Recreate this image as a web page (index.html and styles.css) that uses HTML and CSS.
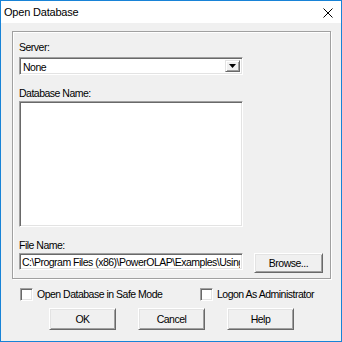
FILE: index.html
```html
<!DOCTYPE html>
<html lang="en">
<head>
    <meta charset="UTF-8">
    <title>Open Database</title>
    <link rel="stylesheet" href="styles.css">
</head>
<body>
<div class="window">
    <div class="titlebar">
        <span class="title">Open Database</span>
        <svg class="close" width="10" height="10" viewBox="0 0 10 10">
            <path d="M0.5 0.5 L9.5 9.5 M9.5 0.5 L0.5 9.5" stroke="#000" stroke-width="1" fill="none"/>
        </svg>
    </div>
    <div class="body">
        <div class="group">
            <div class="label">Server:</div>
            <div class="combo">
                <span class="combo-text">None</span>
                <span class="combo-btn">
                    <svg width="7" height="4" viewBox="0 0 7 4"><path d="M0 0 H7 L3.5 4 Z" fill="#000"/></svg>
                </span>
            </div>
            <div class="label gap">Database Name:</div>
            <div class="listbox"></div>
            <div class="label gap">File Name:</div>
            <div class="file-row">
                <input class="field" type="text" value="C:\Program Files (x86)\PowerOLAP\Examples\Using PowerOLAP.olp" readonly>
                <button class="btn browse">Browse...</button>
            </div>
        </div>

        <div class="checks">
            <label class="check first"><span class="box"></span>Open Database in Safe Mode</label>
            <label class="check"><span class="box"></span>Logon As Administrator</label>
        </div>

        <div class="buttons">
            <button class="btn">OK</button>
            <button class="btn">Cancel</button>
            <button class="btn">Help</button>
        </div>
    </div>
</div>
</body>
</html>
```
FILE: styles.css
```css
* {
    margin: 0;
    padding: 0;
    box-sizing: border-box;
}

body {
    width: 342px;
    height: 342px;
    font-family: "Liberation Sans", Arial, sans-serif;
    font-size: 10.5px;
    letter-spacing: -0.5px;
    line-height: 13px;
    color: #000;
    white-space: nowrap;
}

.window {
    width: 342px;
    height: 342px;
    border: 1px solid #1883d7;
    display: flex;
    flex-direction: column;
    background: #f0f0f0;
}

.titlebar {
    height: 22px;
    background: #fff;
    display: flex;
    align-items: center;
    justify-content: space-between;
    padding: 0 8px 0 3px;
}

.title {
    font-size: 11px;
    letter-spacing: -0.2px;
    padding-top: 1px;
}

.close {
    margin-top: 1px;
}

.body {
    flex: 1;
    padding: 8px 10px 0 11px;
}

.group {
    border: 1px solid #a0a0a0;
    box-shadow: inset 1px 1px 0 #fff, 1px 1px 0 #fff;
    padding: 9px 7px 5px 6px;
}

.label {
    height: 13px;
    margin-bottom: 3px;
}

.label.gap {
    margin-top: 12px;
    margin-bottom: 1px;
}

.group .label:last-of-type {
    margin-bottom: 2px;
}

.combo,
.listbox,
.field {
    width: 224px;
    background: #fff;
    border: 1px solid;
    border-color: #a0a0a0 #fff #fff #a0a0a0;
    box-shadow: inset 1px 1px 0 #696969, inset -1px -1px 0 #e3e3e3;
}

.combo {
    height: 18px;
    display: flex;
    align-items: stretch;
    padding: 2px;
}

.combo-text {
    flex: 1;
    padding-left: 1px;
    line-height: 14px;
}

.combo-btn {
    width: 15px;
    background: #f0f0f0;
    border: 1px solid;
    border-color: #e3e3e3 #696969 #696969 #e3e3e3;
    box-shadow: inset 1px 1px 0 #fff, inset -1px -1px 0 #a0a0a0;
    display: flex;
    align-items: center;
    justify-content: center;
}

.listbox {
    height: 126px;
}

.file-row {
    display: flex;
    align-items: flex-start;
}

.field {
    height: 17px;
    padding: 0 2px;
    font: inherit;
    letter-spacing: inherit;
    color: #000;
    outline: none;
}

.btn {
    font: inherit;
    letter-spacing: inherit;
    color: #000;
    background: #f0f0f0;
    border: 1px solid;
    border-color: #fff #696969 #696969 #fff;
    box-shadow: inset 1px 1px 0 #e3e3e3, inset -1px -1px 0 #a0a0a0;
    width: 67px;
    height: 22px;
}

.browse {
    width: 69px;
    height: 20px;
    margin-left: auto;
}

.checks {
    display: flex;
    margin-top: 9px;
    padding-left: 8px;
    height: 13px;
}

.check {
    display: flex;
    align-items: center;
    gap: 4px;
}

.check.first {
    width: 180px;
}

.box {
    width: 13px;
    height: 13px;
    background: #fff;
    border: 1px solid;
    border-color: #a0a0a0 #fff #fff #a0a0a0;
    box-shadow: inset 1px 1px 0 #696969, inset -1px -1px 0 #e3e3e3;
}

.buttons {
    display: flex;
    justify-content: center;
    gap: 22px;
    margin-top: 7px;
}
```
